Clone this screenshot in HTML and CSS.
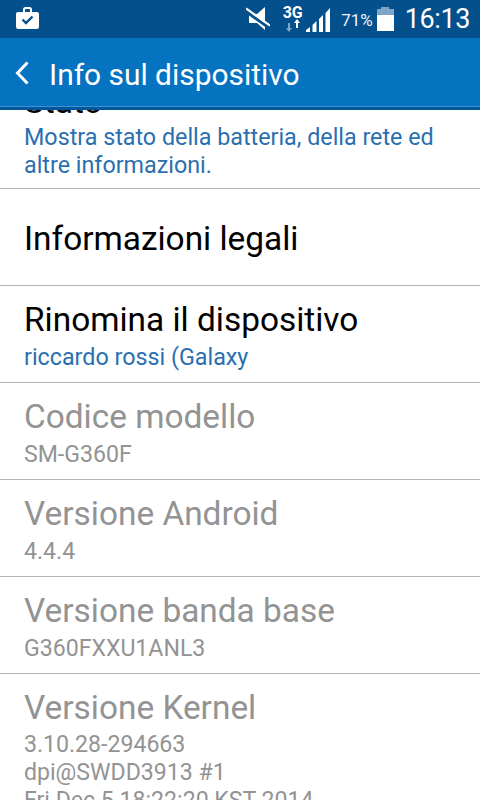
FILE: index.html
```html
<!DOCTYPE html>
<html lang="it">
<head>
    <meta charset="UTF-8">
    <meta name="viewport" content="width=device-width, initial-scale=1.0">
    <title>Info sul dispositivo</title>
    <link rel="stylesheet" href="styles.css">
</head>
<body>
    <div class="phone">
        <div class="status-bar">
            <svg class="icon-briefcase" width="23" height="22" viewBox="0 0 23 22">
                <path fill="#fff" fill-rule="evenodd" d="M7 5V2.500Q7 0 9.500 0h4Q16 0 16 2.500V5H21Q23 5 23 7V19.500Q23 22 21 22H2Q0 22 0 19.500V7Q0 5 2 5ZM9 5h5V2.500Q14 2 13.500 2h-4Q9 2 9 2.500Z"/>
                <path fill="none" stroke="#04508c" stroke-width="2.400" d="M6.500 12.500l3.500 3.500 6.500-6.500"/>
            </svg>
            <div class="status-right">
                <svg class="icon-mute" width="24" height="24" viewBox="0 0 24 24">
                    <path fill="#fff" d="M3 7H11L19 0V23L11 16H3Z"/>
                    <path stroke="#04508c" stroke-width="3" d="M0 4.500L24 21.500"/>
                    <path stroke="#fff" stroke-width="2.200" d="M0 1.500L24 18.500"/>
                </svg>
                <div class="net">
                    <span class="net-label">3G</span>
                    <svg width="14" height="13" viewBox="0 0 14 13">
                        <path fill="#7fa5c6" d="M2 4H4V9H6L3 13 0 9H2Z"/>
                        <path fill="#fff" d="M10 9H12V4H14L11 0 8 4H10Z"/>
                    </svg>
                </div>
                <svg class="icon-signal" width="24" height="24" viewBox="0 0 24 24">
                    <path fill="#fff" d="M0 24V22L4 19V24ZM6.500 24V17L10.500 13V24ZM13 24V11L17 7V24ZM19.500 24V5L24 0V24Z"/>
                </svg>
                <span class="battery-text">71%</span>
                <div class="battery">
                    <div class="battery-cap"></div>
                    <div class="battery-body"><div class="battery-fill"></div></div>
                </div>
                <span class="clock">16:13</span>
            </div>
        </div>
        <div class="action-bar">
            <svg class="icon-back" width="14" height="24" viewBox="0 0 14 24">
                <path fill="none" stroke="#fff" stroke-width="3" d="M12.500 1.500L2.500 12l10 10.500"/>
            </svg>
            <span class="action-title">Info sul dispositivo</span>
        </div>
        <div class="list">
            <div class="row row-first">
                <div class="row-title">Stato</div>
                <div class="row-sub">Mostra stato della batteria, della rete ed altre informazioni.</div>
            </div>
            <div class="row row-single">
                <div class="row-title">Informazioni legali</div>
            </div>
            <div class="row">
                <div class="row-title">Rinomina il dispositivo</div>
                <div class="row-sub">riccardo rossi (Galaxy</div>
            </div>
            <div class="row off">
                <div class="row-title">Codice modello</div>
                <div class="row-sub">SM-G360F</div>
            </div>
            <div class="row off">
                <div class="row-title">Versione Android</div>
                <div class="row-sub">4.4.4</div>
            </div>
            <div class="row off">
                <div class="row-title">Versione banda base</div>
                <div class="row-sub">G360FXXU1ANL3</div>
            </div>
            <div class="row off row-last">
                <div class="row-title">Versione Kernel</div>
                <div class="row-sub">3.10.28-294663<br>dpi@SWDD3913 #1<br>Fri Dec 5 18:22:20 KST 2014</div>
            </div>
        </div>
    </div>
</body>
</html>
```

FILE: styles.css
```css
html, body {
    margin: 0;
    padding: 0;
}
body {
    width: 480px;
    height: 800px;
    overflow: hidden;
    background-color: #fff;
    font-family: Roboto, sans-serif;
}
.phone {
    display: flex;
    flex-direction: column;
    height: 800px;
    overflow: hidden;
}
.status-bar {
    flex: 0 0 38px;
    display: flex;
    justify-content: space-between;
    align-items: center;
    padding: 0 10px 0 16px;
    background-color: #04508c;
    color: #fff;
}
.icon-briefcase {
    margin-bottom: 3px;
}
.status-right {
    display: flex;
    align-items: center;
}
.icon-mute {
    margin-right: 11px;
}
.net {
    display: flex;
    flex-direction: column;
    align-items: center;
    width: 23px;
    margin-right: 2px;
}
.net-label {
    font-size: 16px;
    font-weight: 700;
    line-height: 13px;
}
.icon-signal {
    margin-top: 2px;
}
.battery-text {
    font-size: 17px;
    margin: 2px 4px 0 11px;
    color: #eef3f8;
}
.battery {
    display: flex;
    flex-direction: column;
    align-items: center;
    width: 17px;
    margin-right: 11px;
}
.battery-cap {
    width: 8px;
    height: 2px;
    background-color: #7fa5c6;
}
.battery-body {
    width: 100%;
    height: 22px;
    display: flex;
    align-items: flex-end;
    background-color: #7fa5c6;
}
.battery-fill {
    width: 100%;
    height: 16px;
    background-color: #fff;
}
.clock {
    font-size: 27px;
    letter-spacing: -0.4px;
}
.action-bar {
    flex: 0 0 72px;
    box-sizing: border-box;
    display: flex;
    align-items: center;
    padding-left: 15px;
    background-color: #0673c1;
    border-bottom: 3px solid #04569b;
    box-shadow: inset 0 -1px 0 #3f93d2;
    position: relative;
    z-index: 1;
}
.action-title {
    margin-left: 20px;
    padding-top: 3px;
    color: #fff;
    font-size: 29.9px;
}
.list {
    flex: 1;
}
.row {
    box-sizing: border-box;
    height: 97px;
    padding: 15px 24px 0;
    border-bottom: 1px solid #b4b4b4;
}
.row-first {
    height: 123px;
    margin-top: -44px;
    padding-top: 17px;
}
.row-first .row-sub {
    margin-top: 2px;
}
.row-single {
    padding-top: 31px;
}
.row-last {
    height: auto;
    border-bottom: 0;
}
.row-title {
    color: #000;
    font-size: 33.4px;
    line-height: 38px;
}
.row-sub {
    margin-top: 4px;
    color: #2a6fb0;
    font-size: 23.3px;
    line-height: 28px;
}
.off .row-title, .off .row-sub {
    color: #939393;
}
.off .row-sub {
    margin-top: 5px;
    font-size: 23.1px;
}
.row-last.off .row-sub {
    margin-top: 4px;
}
```
